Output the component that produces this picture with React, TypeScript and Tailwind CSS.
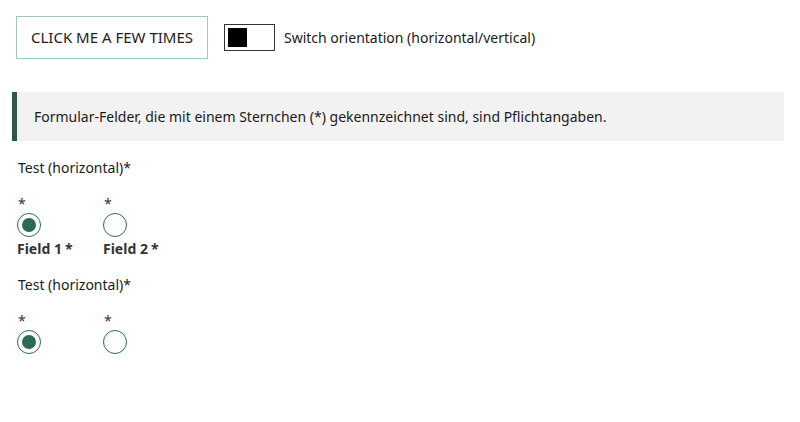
import React, { useState } from 'react';

const font = { fontFamily: '"Noto Sans", "Open Sans", sans-serif' };

function Radio({ checked }: { checked: boolean }) {
  return (
    <span className="w-6 h-6 rounded-full border-[1.5px] border-[#2b6a54] flex items-center justify-center bg-white">
      {checked && <span className="w-[14px] h-[14px] rounded-full bg-[#2b6a54]" />}
    </span>
  );
}

function RadioGroup({ labels, top }: { labels?: string[]; top: string }) {
  return (
    <div className={top}>
      <p className="text-[14px] text-[#1a1a1a] leading-5 pl-[18px]">Test (horizontal)*</p>
      <div className="flex gap-[62px] pl-[17px] mt-[18px]">
        {[0, 1].map(i => (
          <div key={i} className="flex flex-col items-start w-6">
            <span className="text-[14px] leading-4 text-[#333] pl-[1px]">*</span>
            <span className="mt-[1px]"><Radio checked={i === 0} /></span>
            {labels && (
              <span className="text-[14px] font-bold text-[#333] leading-4 mt-[4px] whitespace-nowrap">
                {labels[i]}<span className="ml-[3px]">*</span>
              </span>
            )}
          </div>
        ))}
      </div>
    </div>
  );
}

export default function App() {
  const [on, setOn] = useState(false);
  return (
    <div className="w-[800px] h-[422px] bg-white" style={font}>
      <div className="flex items-center pt-4 pl-4 gap-4">
        <button className="w-[192px] h-[43px] border border-[#a3c7bf] text-[15px] text-[#222] bg-white">
          CLICK ME A FEW TIMES
        </button>
        <button
          onClick={() => setOn(!on)}
          className="w-[51px] h-[27px] border border-[#333] p-[3px] flex bg-white"
        >
          <span className={`w-[19px] h-[19px] bg-black ${on ? 'ml-auto' : ''}`} />
        </button>
        <span className="text-[14px] text-[#1a1a1a] -ml-[7px]">Switch orientation (horizontal/vertical)</span>
      </div>

      <div className="mt-[33px] ml-3 mr-4 h-[49px] bg-[#f2f2f2] border-l-[5px] border-[#2b5a4a] flex items-center pl-[17px]">
        <p className="text-[14px] text-[#1a1a1a]">
          Formular-Felder, die mit einem Sternchen (*) gekennzeichnet sind, sind Pflichtangaben.
        </p>
      </div>

      <RadioGroup labels={['Field 1', 'Field 2']} top="pt-[17px]" />
      <RadioGroup top="pt-[18px]" />
    </div>
  );
}
